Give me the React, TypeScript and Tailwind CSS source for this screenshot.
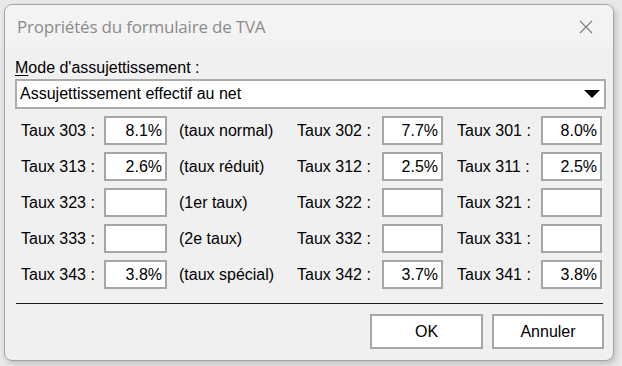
import React from "react";

interface RateRow {
  left: string;
  leftValue: string;
  note: string;
  mid: string;
  midValue: string;
  right: string;
  rightValue: string;
}

const rows: RateRow[] = [
  { left: "Taux 303 :", leftValue: "8.1%", note: "(taux normal)", mid: "Taux 302 :", midValue: "7.7%", right: "Taux 301 :", rightValue: "8.0%" },
  { left: "Taux 313 :", leftValue: "2.6%", note: "(taux réduit)", mid: "Taux 312 :", midValue: "2.5%", right: "Taux 311 :", rightValue: "2.5%" },
  { left: "Taux 323 :", leftValue: "", note: "(1er taux)", mid: "Taux 322 :", midValue: "", right: "Taux 321 :", rightValue: "" },
  { left: "Taux 333 :", leftValue: "", note: "(2e taux)", mid: "Taux 332 :", midValue: "", right: "Taux 331 :", rightValue: "" },
  { left: "Taux 343 :", leftValue: "3.8%", note: "(taux spécial)", mid: "Taux 342 :", midValue: "3.7%", right: "Taux 341 :", rightValue: "3.8%" },
];

function RateBox({ value, width }: { value: string; width: string }) {
  return (
    <div className={`${width} h-[29px] bg-white border-2 border-[#a6a6a6] flex items-center justify-end pr-[3px]`}>
      {value}
    </div>
  );
}

export default function App() {
  return (
    <div
      className="w-[622px] h-[366px] bg-[#e9e9e9] pt-[4px] pl-[4px] text-black"
      style={{ fontFamily: '"Liberation Sans", Arial, sans-serif' }}
    >
      <div className="w-[610px] h-[357px] rounded-[8px] border border-[#a3a3a3] bg-[#f0f0f0] overflow-hidden flex flex-col shadow-[2px_3px_6px_rgba(0,0,0,0.18)]">
        {/* title bar */}
        <div className="h-[42px] bg-[#f3f3f3] flex items-center justify-between pl-[12px] pr-[20px]">
          <span className="text-[17px] text-[#8b8b8b] pt-[1px] tracking-[-0.2px]" style={{ fontFamily: '"Open Sans", "Noto Sans", sans-serif' }}>
            Propriétés du formulaire de TVA
          </span>
          <svg width="14" height="14" viewBox="0 0 14 14" className="mt-[1px]">
            <path d="M1 1 L13 13 M13 1 L1 13" stroke="#7c7c7c" strokeWidth="1.1" fill="none" />
          </svg>
        </div>

        {/* body */}
        <div className="flex-1 flex flex-col pl-[10px] pr-[7px] pt-[12px] text-[16px] leading-[18px]">
          <div className="mb-[2px]">
            <span className="underline underline-offset-2">M</span>ode d'assujettissement :
          </div>

          <div className="h-[30px] bg-white border-2 border-[#ababab] flex items-center justify-between pl-[3px] pr-[4px]">
            <span>Assujettissement effectif au net</span>
            <svg width="16" height="8" viewBox="0 0 16 8">
              <path d="M0 0 H16 L8 8 Z" fill="#000" />
            </svg>
          </div>

          <div className="flex flex-col gap-[7px] mt-[7px]">
            {rows.map((r) => (
              <div key={r.left} className="flex items-center">
                <span className="w-[89px] pl-[6px]">{r.left}</span>
                <RateBox value={r.leftValue} width="w-[63px]" />
                <span className="w-[130px] pl-[12px]">{r.note}</span>
                <span className="w-[85px]">{r.mid}</span>
                <RateBox value={r.midValue} width="w-[61px]" />
                <span className="w-[98px] pl-[14px]">{r.right}</span>
                <RateBox value={r.rightValue} width="w-[61px]" />
              </div>
            ))}
          </div>

          <div className="mt-[14px] ml-[1px] mr-[3px] h-px bg-[#1a1a1a]" />

          <div className="flex justify-end gap-[9px] mt-[10px] pr-[2px]">
            <button className="w-[113px] h-[35px] bg-white border-2 border-[#a6a6a6]">OK</button>
            <button className="w-[112px] h-[35px] bg-white border-2 border-[#a6a6a6]">Annuler</button>
          </div>
        </div>
      </div>
    </div>
  );
}
